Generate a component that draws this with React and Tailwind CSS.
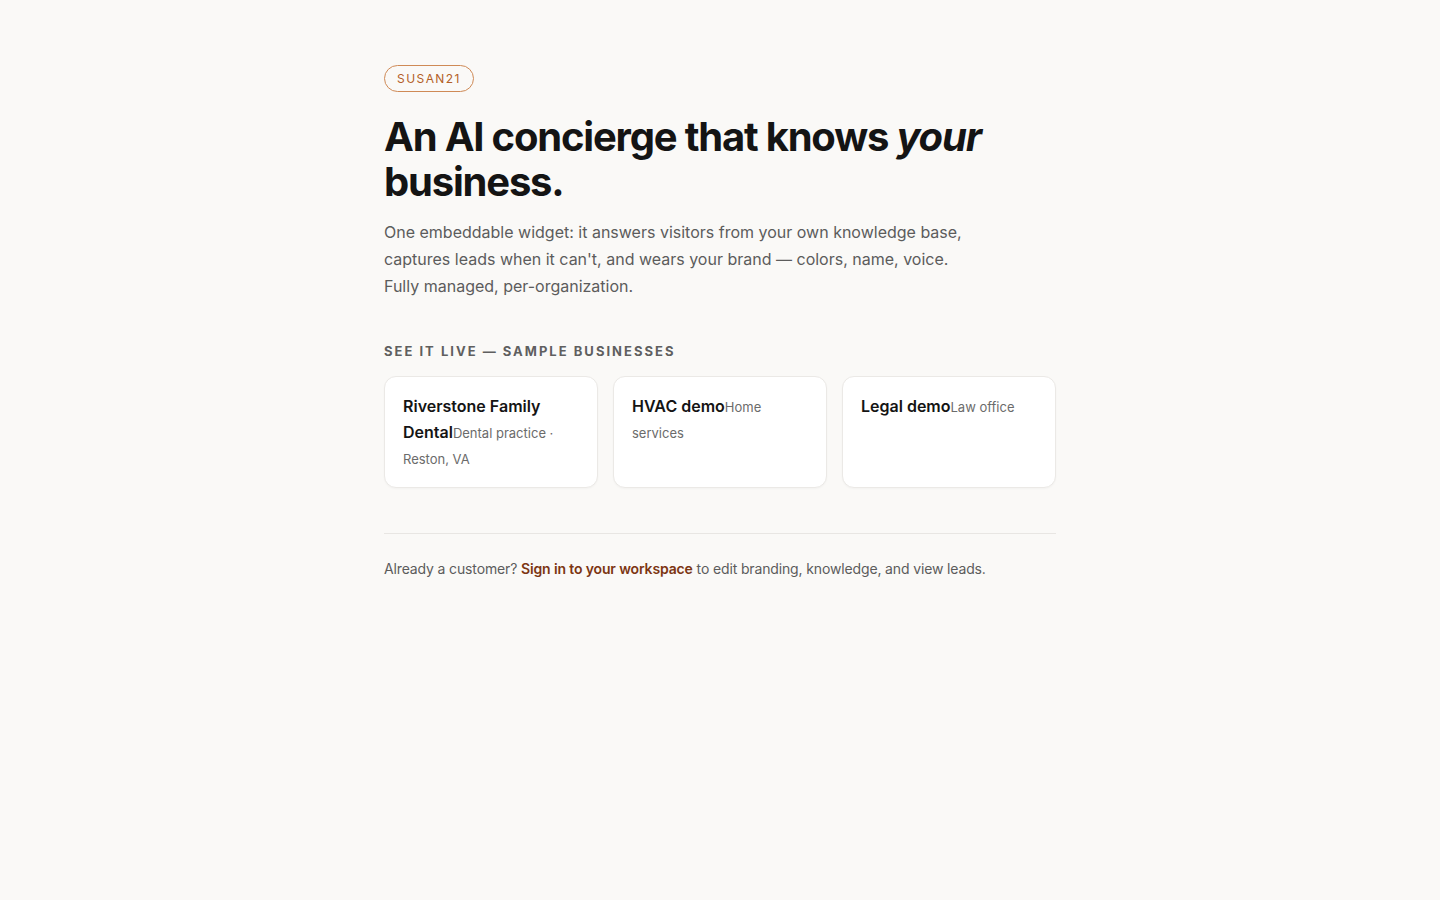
export default function App() {
  const samples = [
    { name: "Riverstone Family Dental", meta: "Dental practice · Reston, VA" },
    { name: "HVAC demo", meta: "Home services" },
    { name: "Legal demo", meta: "Law office" },
  ];

  return (
    <div className="min-h-screen bg-[#faf9f7] font-['Inter',sans-serif] text-[#171717]">
      <div className="max-w-[672px] mx-auto pt-[65px] pb-16">
        <span className="inline-block rounded-full border border-[#cf8a56] px-3 pt-[4px] pb-[3px] text-xs leading-[18px] tracking-[0.12em] text-[#b35f27]">
          SUSAN21
        </span>

        <h1 className="mt-[22px] text-[40px] leading-[45px] font-bold tracking-[-0.03em] text-[#141414]">
          An AI concierge that knows <em>your</em> business.
        </h1>

        <p className="mt-[15px] max-w-[600px] text-base leading-[27px] text-[#5c5c5c]">
          One embeddable widget: it answers visitors from your own knowledge base,
          captures leads when it can't, and wears your brand — colors, name, voice.
          Fully managed, per-organization.
        </p>

        <h2 className="mt-[41px] text-[13px] leading-5 font-bold tracking-[0.155em] text-[#5f5f5f]">
          SEE IT LIVE — SAMPLE BUSINESSES
        </h2>

        <div className="mt-[15px] grid grid-cols-3 gap-[15px]">
          {samples.map((s) => (
            <a
              key={s.name}
              href="#"
              className="block rounded-xl border border-[#ebe9e6] bg-white p-4 pl-[18px] shadow-[0_1px_2px_rgba(0,0,0,0.03)] leading-[26px]"
            >
              <strong className="text-base font-semibold text-[#141414]">{s.name}</strong>
              <span className="text-[13px] leading-none text-[#6b6b6b]">{s.meta}</span>
            </a>
          ))}
        </div>

        <div className="mt-[45px] border-t border-[#e8e6e3] pt-[25px]">
          <p className="text-sm leading-5 tracking-[-0.01em] text-[#5c5c5c]">
            Already a customer?{" "}
            <a href="#" className="font-semibold text-[#7c3512]">
              Sign in to your workspace
            </a>{" "}
            to edit branding, knowledge, and view leads.
          </p>
        </div>
      </div>
    </div>
  );
}
